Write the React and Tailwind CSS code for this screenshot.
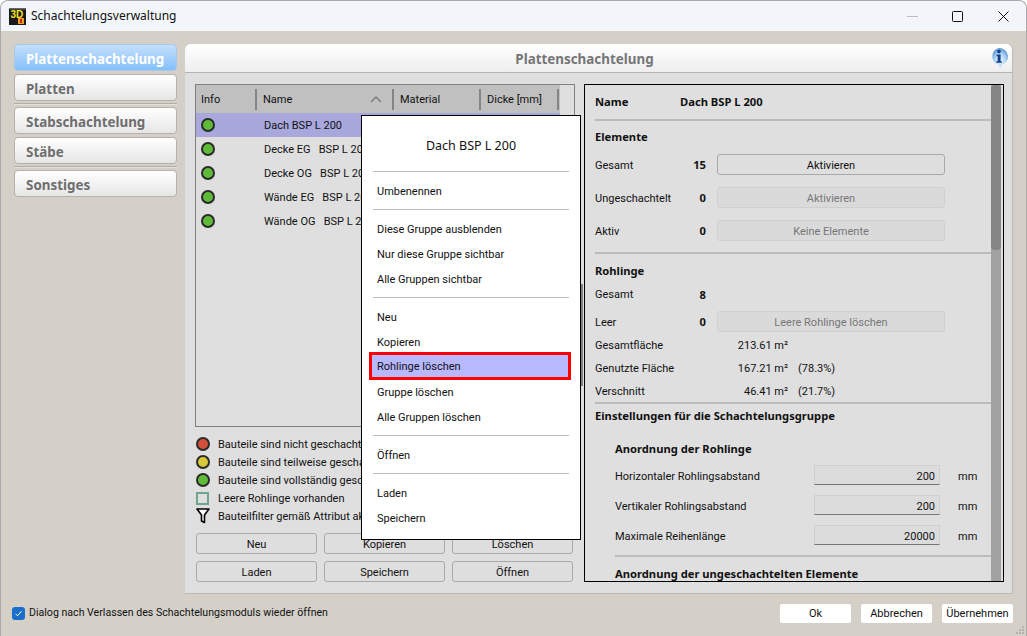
const nav = [
  { label: "Plattenschachtelung", active: true },
  { label: "Platten", sep: true },
  { label: "Stabschachtelung" },
  { label: "Stäbe", sep: true },
  { label: "Sonstiges" },
];

const groups = [
  "Dach BSP L 200",
  "Decke EG   BSP L 200",
  "Decke OG   BSP L 200",
  "Wände EG   BSP L 200",
  "Wände OG   BSP L 200",
];

const menu = [
  ["Umbenennen"],
  ["Diese Gruppe ausblenden", "Nur diese Gruppe sichtbar", "Alle Gruppen sichtbar"],
  ["Neu", "Kopieren", "Rohlinge löschen", "Gruppe löschen", "Alle Gruppen löschen"],
  ["Öffnen"],
  ["Laden", "Speichern"],
];

const boldText = "font-['Noto_Sans',sans-serif] font-bold text-[11.2px]";

function Dot({ color }) {
  return <span className={`block w-[14px] h-[14px] rounded-full border-2 border-[#2a2a2a] shrink-0 ${color}`} />;
}

function HeaderCell({ label, width, children }) {
  return (
    <div className={`${width} h-full flex items-center pl-[5px] pr-[1px]`}>
      <span>{label}</span>
      <span className="flex-1 flex justify-end pr-[10px]">{children}</span>
      <span className="w-[2px] h-[21px] bg-[#858585]" />
    </div>
  );
}

function Btn({ children, disabled, className = "" }) {
  return (
    <div
      className={`h-[21px] flex items-center justify-center pt-[2px] rounded-[3px] border ${
        disabled ? "border-[#cfcfcf] bg-[#dadada] text-[#777777]" : "border-[#a9a9a9] bg-[#dedede] text-[#111111]"
      } ${className}`}
    >
      {children}
    </div>
  );
}

function CountRow({ label, value, action, disabled, className = "" }) {
  return (
    <div className={`flex items-center h-[21px] ${className}`}>
      <span className={`w-[88px] ${action ? "pt-[2px]" : ""}`}>{label}</span>
      <span className={`w-[23px] text-right ${boldText}`}>{value}</span>
      {action && (
        <Btn disabled={disabled} className="ml-[11px] w-[228px]">
          {action}
        </Btn>
      )}
    </div>
  );
}

function AreaRow({ label, value, pct, className = "h-[23px]" }) {
  return (
    <div className={`flex items-center ${className}`}>
      <span className="w-[110px]">{label}</span>
      <span className="w-[83px] text-right">{value}</span>
      {pct && <span className="ml-[10px]">{pct}</span>}
    </div>
  );
}

function InputRow({ label, value, className = "mt-[10px]" }) {
  return (
    <div className={`flex items-center h-[20px] pl-[20px] ${className}`}>
      <span className="w-[199px] pt-[2px]">{label}</span>
      <div className="w-[126px] h-[20px] flex items-center justify-end pr-[4px] pt-[2px] bg-[#dcdcdc] border border-[#d0d0d0] border-b-[#777777]">
        {value}
      </div>
      <span className="ml-[18px] pt-[2px]">mm</span>
    </div>
  );
}

function Line({ className = "" }) {
  return <div className={`h-[2px] bg-[#bcbcbc] ${className}`} />;
}

function AppIcon() {
  return (
    <svg width="17" height="17" viewBox="0 0 17 17" className="shrink-0">
      <rect width="17" height="17" fill="#1a1a1a" />
      <rect x="0" y="0" width="17" height="1.5" fill="#666666" />
      <text x="1.5" y="10" fontSize="10" fontWeight="700" fill="#f4e41c" fontFamily="Liberation Sans, sans-serif">3D</text>
      <rect x="9" y="10" width="6" height="6" fill="#e9a02c" />
      <rect x="11" y="11" width="2" height="4" fill="#c8281a" />
    </svg>
  );
}

function InfoIcon() {
  return (
    <svg width="20" height="22" viewBox="0 0 20 22" className="shrink-0">
      <defs>
        <radialGradient id="bubble" cx="50%" cy="62%" r="62%">
          <stop offset="0%" stopColor="#eef7ff" />
          <stop offset="60%" stopColor="#a8cff4" />
          <stop offset="100%" stopColor="#4f8fd0" />
        </radialGradient>
      </defs>
      <path d="M10 1a9 8.6 0 0 1 3 16.7L11 21l-1-3.4A9 8.6 0 0 1 10 1z" fill="url(#bubble)" />
      <circle cx="10" cy="4.6" r="1.8" fill="#12408a" />
      <path d="M7.6 7.6h4v6.6h1.2v1.6H7.4v-1.6h1.3V9.2H7.6z" fill="#12408a" />
    </svg>
  );
}

function Funnel() {
  return (
    <svg width="14" height="16" viewBox="0 0 14 16" className="shrink-0">
      <path d="M1 1h12L8.5 7v7.5L5.5 13V7z" fill="#ffffff" stroke="#000000" strokeWidth="1.6" strokeLinejoin="round" />
    </svg>
  );
}

export default function App() {
  return (
    <div className="relative w-[1027px] h-[636px] flex flex-col overflow-hidden bg-[#d4d0c8] text-[#111111] text-[11px] leading-none rounded-t-[8px] border-t border-x border-[#a9a9a9] font-['Roboto',sans-serif]">
      {/* Title bar */}
      <div className="h-[30px] shrink-0 flex items-center pl-[8px] bg-[#f2f6fa] text-[12px] font-['Noto_Sans',sans-serif]">
        <AppIcon />
        <span className="ml-[5px]">Schachtelungsverwaltung</span>
        <div className="ml-auto flex items-center pr-[17px]">
          <svg width="11" height="11" viewBox="0 0 11 11" className="mr-[34px]">
            <path d="M0 5.5h11" stroke="#bdbdbd" />
          </svg>
          <svg width="11" height="11" viewBox="0 0 11 11" className="mr-[35px]">
            <rect x="0.5" y="0.5" width="10" height="10" rx="1" fill="none" stroke="#111111" />
          </svg>
          <svg width="11" height="11" viewBox="0 0 11 11">
            <path d="M0.5 0.5l10 10M10.5 0.5l-10 10" stroke="#111111" />
          </svg>
        </div>
      </div>

      {/* Body */}
      <div className="flex-1 flex pt-[13px] pl-[13px] pr-[13px] min-h-0">
        <div className="w-[163px] shrink-0 mr-[8px] font-['Noto_Sans',sans-serif]">
          {nav.map((item) => (
            <div key={item.label}>
              <div
                className={`h-[27px] flex items-center pl-[11px] pt-[4px] rounded-[4px] border text-[13.4px] font-bold ${
                  item.active
                    ? "border-[#a9c8e6] bg-gradient-to-b from-[#c4dffb] to-[#84c0fa] text-white"
                    : "border-[#b6b2aa] bg-gradient-to-b from-[#ffffff] to-[#e6e6e6] text-[#6e6e6e]"
                }`}
              >
                {item.label}
              </div>
              {item.sep ? <div className="h-[2px] my-[2px] bg-[#b2aea6] border-b border-[#e4e1da]" /> : <div className="h-[3px]" />}
            </div>
          ))}
        </div>

        <div className="flex-1 h-[550px] flex flex-col bg-[#dfdfdf] rounded-t-[6px] border-r border-b border-[#b9b9b9]">
          <div className="relative h-[29px] shrink-0 flex items-center justify-center pr-[28px] pt-[3px] rounded-t-[6px] bg-gradient-to-b from-[#ffffff] to-[#eeeeee] border-b border-[#b4b4b4] text-[13.4px] font-bold text-[#767676] font-['Noto_Sans',sans-serif]">
            Plattenschachtelung
            <div className="absolute right-[3px] top-[3px]">
              <InfoIcon />
            </div>
          </div>

          <div className="flex-1 flex gap-[9px] pl-[10px] pt-[11px] min-h-0">
            {/* Left column */}
            <div className="w-[380px] shrink-0">
              <div className="h-[343px] border border-[#808080]">
                <div className="h-[28px] w-[364px] flex items-center bg-[#c0c0c0]">
                  <HeaderCell label="Info" width="w-[62px]" />
                  <HeaderCell label="Name" width="w-[137px]">
                    <svg width="12" height="7" viewBox="0 0 12 7">
                      <path d="M1 6l5-5 5 5" fill="none" stroke="#808080" strokeWidth="1.6" />
                    </svg>
                  </HeaderCell>
                  <HeaderCell label="Material" width="w-[87px]" />
                  <HeaderCell label="Dicke [mm]" width="w-[78px]" />
                </div>
                {groups.map((name, i) => (
                  <div
                    key={name}
                    className={`h-[24px] w-[364px] flex items-center pl-[5px] ${i === 0 ? "bg-[#a8a8dc]" : ""}`}
                  >
                    <Dot color="bg-[#5fba3a]" />
                    <span className="ml-[49px] whitespace-pre">{name}</span>
                  </div>
                ))}
              </div>

              <div className="mt-[8px] h-[90px] flex flex-col">
                {[
                  ["bg-[#d2503c]", "Bauteile sind nicht geschachtelt"],
                  ["bg-[#d8c83c]", "Bauteile sind teilweise geschachtelt"],
                  ["bg-[#5fba3a]", "Bauteile sind vollständig geschachtelt"],
                ].map(([color, text]) => (
                  <div key={text} className="h-[18px] flex items-center pl-[1px]">
                    <Dot color={color} />
                    <span className="ml-[8px]">{text}</span>
                  </div>
                ))}
                <div className="h-[18px] flex items-center pl-[1px]">
                  <span className="block w-[13px] h-[13px] border-2 border-[#6fa58c] shrink-0" />
                  <span className="ml-[9px]">Leere Rohlinge vorhanden</span>
                </div>
                <div className="h-[18px] flex items-center pl-[1px]">
                  <Funnel />
                  <span className="ml-[8px]">Bauteilfilter gemäß Attribut aktiv</span>
                </div>
              </div>

              <div className="mt-[8px] px-[1px] grid grid-cols-[121px_121px_121px] gap-[7px]">
                {["Neu", "Kopieren", "Löschen", "Laden", "Speichern", "Öffnen"].map((b) => (
                  <Btn key={b}>{b}</Btn>
                ))}
              </div>
            </div>

            {/* Right column */}
            <div className="w-[420px] h-[498px] shrink-0 flex border border-black pr-[2px]">
              <div className="w-[406px] h-full overflow-hidden pl-[10px]">
                <div className={`h-[34px] flex items-center ${boldText}`}>
                  <span className="w-[85px]">Name</span>
                  <span>Dach BSP L 200</span>
                </div>
                <Line />
                <div className={`h-[33px] pb-[2px] flex items-center ${boldText}`}>Elemente</div>
                <CountRow label="Gesamt" value="15" action="Aktivieren" />
                <CountRow label="Ungeschachtelt" value="0" action="Aktivieren" disabled className="mt-[12px]" />
                <CountRow label="Aktiv" value="0" action="Keine Elemente" disabled className="mt-[12px]" />
                <Line className="mt-[11px]" />
                <div className={`h-[30px] pt-[4px] flex items-center ${boldText}`}>Rohlinge</div>
                <CountRow label="Gesamt" value="8" />
                <CountRow label="Leer" value="0" action="Leere Rohlinge löschen" disabled className="mt-[6px]" />
                <AreaRow label="Gesamtfläche" value="213.61 m²" className="mt-[2px] h-[23px]" />
                <AreaRow label="Genutzte Fläche" value="167.21 m²" pct="(78.3%)" />
                <AreaRow label="Verschnitt" value="46.41 m²" pct="(21.7%)" className="h-[22px]" />
                <Line />
                <div className={`h-[24px] flex items-center ${boldText}`}>Einstellungen für die Schachtelungsgruppe</div>
                <div className={`mt-[10px] h-[22px] pl-[20px] flex items-center ${boldText}`}>Anordnung der Rohlinge</div>
                <InputRow label="Horizontaler Rohlingsabstand" value="200" className="mt-[5px]" />
                <InputRow label="Vertikaler Rohlingsabstand" value="200" />
                <InputRow label="Maximale Reihenlänge" value="20000" />
                <Line className="mt-[10px] ml-[20px]" />
                <div className={`h-[34px] pl-[20px] flex items-center ${boldText}`}>Anordnung der ungeschachtelten Elemente</div>
              </div>
              <div className="w-[10px] h-full bg-[#a2a2a2]">
                <div className="h-[165px] rounded-[4px] bg-[#858585]" />
              </div>
            </div>
          </div>
        </div>
      </div>

      {/* Footer */}
      <div className="h-[42px] shrink-0 flex items-center pl-[11px] pr-[13px] pb-[4px]">
        <span className="w-[13px] h-[13px] rounded-[3px] bg-[#1b6ec9] flex items-center justify-center">
          <svg width="9" height="9" viewBox="0 0 9 9">
            <path d="M1.5 4.8l2 2 4-4.6" fill="none" stroke="#ffffff" strokeWidth="1" />
          </svg>
        </span>
        <span className="ml-[4px] text-[10.6px]">Dialog nach Verlassen des Schachtelungsmoduls wieder öffnen</span>
        <div className="ml-auto flex gap-[10px]">
          {["Ok", "Abbrechen", "Übernehmen"].map((b) => (
            <div key={b} className="w-[71px] h-[19px] flex items-center justify-center bg-white rounded-[2px]">
              {b}
            </div>
          ))}
        </div>
      </div>

      {/* Context menu */}
      <div className="absolute left-[360px] top-[114px] w-[220px] h-[425px] bg-white border border-black">
        <div className="h-[55px] flex items-center justify-center pt-[6px] text-[12.5px] font-['Noto_Sans',sans-serif]">Dach BSP L 200</div>
        {menu.map((section, i) => (
          <div key={i}>
            <div className="mx-[11px] h-[1px] bg-[#bdbdbd]" />
            <div className="pt-[7px] pb-[5px]">
              {section.map((item) =>
                item === "Rohlinge löschen" ? (
                  <div key={item} className="h-[25px] pl-[10px]">
                    <div className="w-[196px] h-[22px] flex items-center pl-[5px] bg-[#b8b8ff] outline-[3px] outline-[#ff0000]">
                      {item}
                    </div>
                  </div>
                ) : (
                  <div key={item} className="h-[25px] flex items-center pl-[15px]">
                    {item}
                  </div>
                )
              )}
            </div>
          </div>
        ))}
      </div>
      <div className="absolute left-[580px] top-[283px] w-[2px] h-[102px] bg-[#808080]" />

      {/* Size grip */}
      <svg width="10" height="10" viewBox="0 0 10 10" className="absolute right-[1px] bottom-[1px]">
        <path d="M7 1h2v2H7zM4 4h2v2H4zM7 4h2v2H7zM1 7h2v2H1zM4 7h2v2H4zM7 7h2v2H7z" fill="#b5b1a9" />
      </svg>
    </div>
  );
}
